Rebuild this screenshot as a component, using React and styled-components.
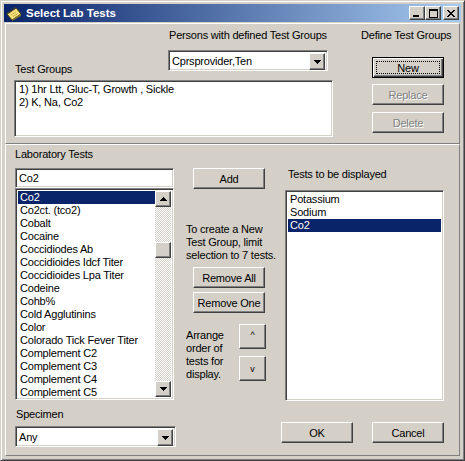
import React from 'react';
import styled, { createGlobalStyle, css } from 'styled-components';

const FACE = '#D4D0C8';
const NAVY = '#0A246A';

const GlobalStyle = createGlobalStyle`
  html, body {
    margin: 0;
    padding: 0;
    background: #fff;
  }
  body {
    font-family: "Liberation Sans", Arial, sans-serif;
    font-size: 11px;
  }
  * {
    box-sizing: border-box;
  }
`;

const raised = css`
  border: 1px solid;
  border-color: #fff #404040 #404040 #fff;
  box-shadow: inset -1px -1px #808080, inset 1px 1px ${FACE};
  background: ${FACE};
`;

const sunken = css`
  border: 1px solid;
  border-color: #808080 #fff #fff #808080;
  box-shadow: inset 1px 1px #404040, inset -1px -1px ${FACE};
  background: #fff;
`;

const Window = styled.div`
  width: 465px;
  height: 461px;
  background: ${FACE};
  border: 1px solid;
  border-color: ${FACE} #404040 #404040 ${FACE};
  box-shadow: inset 1px 1px #fff, inset -1px -1px #808080;
  padding: 3px;
  display: flex;
  flex-direction: column;
  color: #000;
  letter-spacing: -0.2px;
`;

const TitleBar = styled.div`
  height: 18px;
  flex: none;
  display: flex;
  align-items: center;
  padding: 0 2px 0 2px;
  background: linear-gradient(to right, ${NAVY}, #A6CAF0);
`;

const TitleText = styled.div`
  flex: 1;
  margin-left: 4px;
  color: #fff;
  font-weight: bold;
  font-size: 11.5px;
  letter-spacing: 0;
  line-height: 18px;
`;

const CaptionButton = styled.div`
  ${raised};
  width: 16px;
  height: 14px;
  display: flex;
  align-items: center;
  justify-content: center;
  margin-left: ${(p) => p.$gap || 0}px;
  svg {
    display: block;
  }
`;

const Client = styled.div`
  flex: 1;
  display: flex;
  flex-direction: column;
  padding: 1px;
`;

const Panel = styled.div`
  border: 1px solid;
  border-color: #fff #808080 #808080 #fff;
  display: flex;
`;

const TopPanel = styled(Panel)`
  height: 121px;
  flex: none;
  padding: 5px 0 0 8px;
`;

const BottomPanel = styled(Panel)`
  flex: 1;
  padding: 3px 0 0 9px;
`;

const Column = styled.div`
  display: flex;
  flex-direction: column;
  align-items: flex-start;
  width: ${(p) => (p.$width ? `${p.$width}px` : 'auto')};
  margin-left: ${(p) => p.$ml || 0}px;
  flex: none;
`;

const Label = styled.div`
  line-height: 13px;
  height: 13px;
  white-space: nowrap;
  margin-top: ${(p) => p.$mt || 0}px;
  padding-left: ${(p) => p.$pl || 0}px;
`;

const HeaderRow = styled.div`
  display: flex;
  align-items: flex-end;
`;

const TestGroupsLabel = styled(Label)`
  width: 154px;
  padding-left: 1px;
  margin-bottom: -5px;
`;

const Note = styled.div`
  line-height: 13px;
  margin-top: ${(p) => p.$mt || 0}px;
  width: ${(p) => (p.$width ? `${p.$width}px` : 'auto')};
  white-space: pre;
`;

const Button = styled.div`
  ${raised};
  width: ${(p) => p.$w || 72}px;
  height: ${(p) => p.$h || 21}px;
  margin-top: ${(p) => p.$mt || 0}px;
  margin-left: ${(p) => p.$ml || 0}px;
  display: flex;
  align-items: center;
  justify-content: center;
  flex: none;
  color: ${(p) => (p.$disabled ? '#808080' : '#000')};
  text-shadow: ${(p) => (p.$disabled ? '1px 1px #fff' : 'none')};
  ${(p) =>
    p.$default &&
    css`
      border: 1px solid #000;
      box-shadow: inset 1px 1px #fff, inset -1px -1px #404040,
        inset -2px -2px #808080;
      outline: 1px dotted #000;
      outline-offset: -5px;
    `}
`;

const MoveButton = styled(Button)`
  width: 27px;
  height: 25px;
  font-size: 9px;
  padding-bottom: ${(p) => (p.$up ? 3 : 0)}px;
`;

const ComboBox = styled.div`
  ${sunken};
  width: ${(p) => p.$w}px;
  height: 21px;
  margin-top: ${(p) => p.$mt || 0}px;
  padding: 2px;
  display: flex;
  align-items: stretch;
  flex: none;
`;

const ComboText = styled.div`
  flex: 1;
  line-height: 17px;
  padding-left: 1px;
  white-space: nowrap;
`;

const ArrowButton = styled.div`
  ${raised};
  width: 16px;
  height: ${(p) => p.$h || 16}px;
  flex: none;
  display: flex;
  align-items: center;
  justify-content: center;
  svg {
    display: block;
  }
`;

const EditBox = styled.div`
  ${sunken};
  width: 159px;
  height: 20px;
  margin-top: ${(p) => p.$mt || 0}px;
  padding: 2px 3px;
  line-height: 15px;
`;

const ListBox = styled.div`
  ${sunken};
  width: ${(p) => p.$w}px;
  height: ${(p) => p.$h}px;
  margin-top: ${(p) => p.$mt || 0}px;
  margin-left: ${(p) => p.$ml || 0}px;
  padding: 2px;
  display: flex;
  flex: none;
  overflow: hidden;
`;

const Items = styled.div`
  flex: 1;
  min-width: 0;
`;

const Item = styled.div`
  height: 13px;
  line-height: 13px;
  padding-left: 2px;
  white-space: nowrap;
  background: ${(p) => (p.$selected ? NAVY : 'transparent')};
  color: ${(p) => (p.$selected ? '#fff' : '#000')};
`;

const ScrollBar = styled.div`
  width: 16px;
  display: flex;
  flex-direction: column;
  flex: none;
`;

const Track = styled.div`
  flex: 1;
  background-color: #fff;
  background-image: conic-gradient(${FACE} 25%, #fff 0 50%, ${FACE} 0 75%, #fff 0);
  background-size: 2px 2px;
`;

const Thumb = styled.div`
  ${raised};
  width: 16px;
  height: 16px;
  margin-top: ${(p) => p.$offset}px;
`;

const Row = styled.div`
  display: flex;
  margin-top: ${(p) => p.$mt || 0}px;
`;

const Up = () => (
  <svg width="7" height="4" shapeRendering="crispEdges">
    <rect x="3" y="0" width="1" height="1" />
    <rect x="2" y="1" width="3" height="1" />
    <rect x="1" y="2" width="5" height="1" />
    <rect x="0" y="3" width="7" height="1" />
  </svg>
);

const Down = () => (
  <svg width="7" height="4" shapeRendering="crispEdges">
    <rect x="0" y="0" width="7" height="1" />
    <rect x="1" y="1" width="5" height="1" />
    <rect x="2" y="2" width="3" height="1" />
    <rect x="3" y="3" width="1" height="1" />
  </svg>
);

const NotepadIcon = () => (
  <svg width="16" height="16" viewBox="0 0 16 16">
    <polygon points="1,9 10,3 15,9 6,15" fill="#F6E27A" stroke="#5A4A10" strokeWidth="1" />
    <polygon points="6,15 15,9 15,11 6,16" fill="#8A7A30" />
    <path d="M2 8 L10 2.5" stroke="#3A3A3A" strokeWidth="1.6" />
    <path d="M5 10 L10 7 M7 11.5 L12 8.5" stroke="#B8A040" strokeWidth="0.8" />
  </svg>
);

const Minimize = () => (
  <svg width="8" height="7" shapeRendering="crispEdges">
    <rect x="0" y="5" width="6" height="2" />
  </svg>
);

const Maximize = () => (
  <svg width="9" height="9" shapeRendering="crispEdges">
    <rect x="0" y="0" width="9" height="2" />
    <rect x="0" y="0" width="1" height="9" />
    <rect x="8" y="0" width="1" height="9" />
    <rect x="0" y="8" width="9" height="1" />
  </svg>
);

const Close = () => (
  <svg width="8" height="7" viewBox="0 0 8 7" shapeRendering="crispEdges">
    <path d="M0 0h2v1h1v1h2V1h1V0h2v1H7v1H6v1H5v1h1v1h1v1h1v1H6V6H5V5H3v1H2v1H0V6h1V5h1V4h1V3H2V2H1V1H0z" />
  </svg>
);

const labTests = [
  'Co2',
  'Co2ct. (tco2)',
  'Cobalt',
  'Cocaine',
  'Coccidiodes Ab',
  'Coccidioides Idcf Titer',
  'Coccidioides Lpa Titer',
  'Codeine',
  'Cohb%',
  'Cold Agglutinins',
  'Color',
  'Colorado Tick Fever Titer',
  'Complement C2',
  'Complement C3',
  'Complement C4',
  'Complement C5',
];

const displayed = ['Potassium', 'Sodium', 'Co2'];

export default function App() {
  return (
    <>
      <GlobalStyle />
      <Window>
        <TitleBar>
          <NotepadIcon />
          <TitleText>Select Lab Tests</TitleText>
          <CaptionButton>
            <Minimize />
          </CaptionButton>
          <CaptionButton>
            <Maximize />
          </CaptionButton>
          <CaptionButton $gap={2}>
            <Close />
          </CaptionButton>
        </TitleBar>
        <Client>
          <TopPanel>
            <Column $width={319}>
              <HeaderRow>
                <TestGroupsLabel>Test Groups</TestGroupsLabel>
                <Column>
                  <Label $pl={1}>Persons with defined Test Groups</Label>
                  <ComboBox $w={160} $mt={8}>
                    <ComboText>Cprsprovider,Ten</ComboText>
                    <ArrowButton $h={17}>
                      <Down />
                    </ArrowButton>
                  </ComboBox>
                </Column>
              </HeaderRow>
              <ListBox $w={319} $h={57} $mt={9}>
                <Items>
                  <Item>1) 1hr Ltt, Gluc-T, Growth , Sickle</Item>
                  <Item>2) K, Na, Co2</Item>
                </Items>
              </ListBox>
            </Column>
            <Column $ml={28}>
              <Label>Define Test Groups</Label>
              <Button $default $mt={15} $ml={11}>New</Button>
              <Button $disabled $mt={6} $ml={11}>Replace</Button>
              <Button $disabled $mt={7} $ml={11}>Delete</Button>
            </Column>
          </TopPanel>
          <BottomPanel>
            <Column $width={161}>
              <Label>Laboratory Tests</Label>
              <EditBox $mt={7}>Co2</EditBox>
              <ListBox $w={159} $h={212}>
                <Items>
                  {labTests.map((t, i) => (
                    <Item key={t} $selected={i === 0}>
                      {t}
                    </Item>
                  ))}
                </Items>
                <ScrollBar>
                  <ArrowButton>
                    <Up />
                  </ArrowButton>
                  <Track>
                    <Thumb $offset={35} />
                  </Track>
                  <ArrowButton>
                    <Down />
                  </ArrowButton>
                </ScrollBar>
              </ListBox>
              <Label $mt={8} $pl={1}>Specimen</Label>
              <ComboBox $w={161} $mt={5}>
                <ComboText>Any</ComboText>
                <ArrowButton $h={17}>
                  <Down />
                </ArrowButton>
              </ComboBox>
            </Column>
            <Column $width={80} $ml={10}>
              <Button $mt={20} $ml={7}>Add</Button>
              <Note $mt={34}>{'To create a New\nTest Group, limit\nselection to 7 tests.'}</Note>
              <Button $mt={5} $ml={7}>Remove All</Button>
              <Button $mt={4} $ml={7}>Remove One</Button>
              <Row $mt={11}>
                <Note $mt={5} $width={53}>{'Arrange\norder of\ntests for\ndisplay.'}</Note>
                <Column>
                  <MoveButton $up>^</MoveButton>
                  <MoveButton $mt={7}>v</MoveButton>
                </Column>
              </Row>
            </Column>
            <Column $width={163} $ml={15}>
              <Label $mt={20} $pl={7}>Tests to be displayed</Label>
              <ListBox $w={159} $h={211} $mt={9} $ml={4}>
                <Items>
                  {displayed.map((t) => (
                    <Item key={t} $selected={t === 'Co2'}>
                      {t}
                    </Item>
                  ))}
                </Items>
              </ListBox>
              <Row $mt={21}>
                <Button>OK</Button>
                <Button $ml={19}>Cancel</Button>
              </Row>
            </Column>
          </BottomPanel>
        </Client>
      </Window>
    </>
  );
}
